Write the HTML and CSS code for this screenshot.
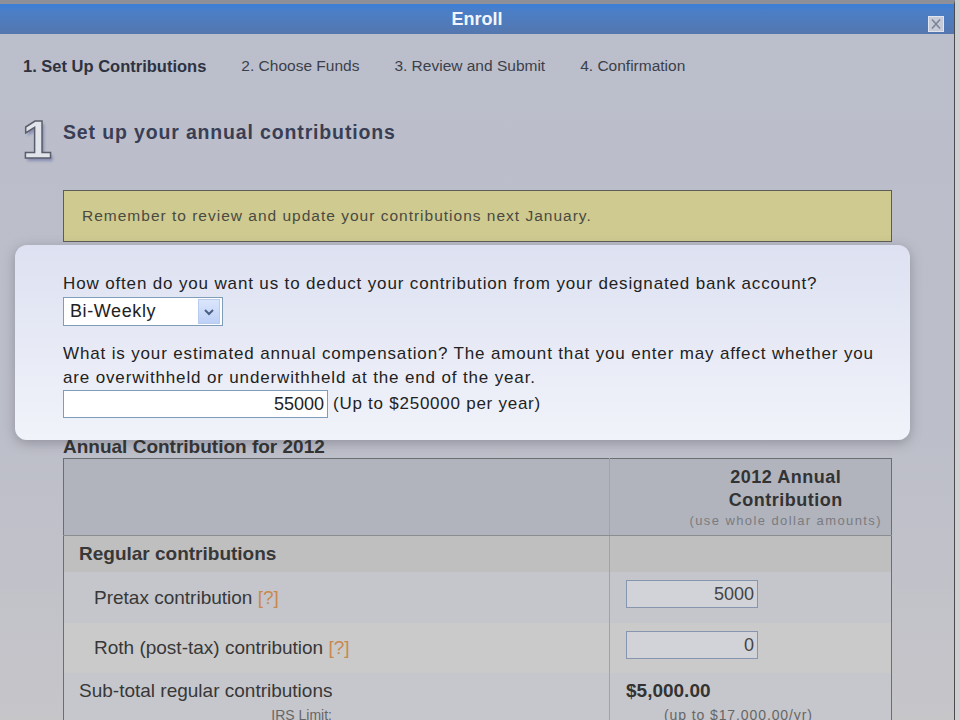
FILE: index.html
```html
<!DOCTYPE html>
<html lang="en">
<head>
	<meta charset="UTF-8">
	<title>Enroll</title>
	<link rel="stylesheet" href="styles.css">
</head>
<body>
	<div id="window">
		<div class="titlebar">
			<span></span>
			<h1>Enroll</h1>
			<a class="close" href="javascript:;">
				<svg width="16" height="16" viewBox="0 0 16 16"><path d="M4 3.5 L12 12.5 M12 3.5 L4 12.5" stroke="#7d8496" stroke-width="1.6" fill="none"/></svg>
			</a>
		</div>
		<div class="content">
			<ul class="steps">
				<li class="current">1. Set Up Contributions</li>
				<li>2. Choose Funds</li>
				<li>3. Review and Submit</li>
				<li>4. Confirmation</li>
			</ul>
			<div class="step-head">
				<span class="step-num">1</span>
				<h2>Set up your annual contributions</h2>
			</div>
			<div class="notice">Remember to review and update your contributions next January.</div>
			<div class="spotlight">
				<p class="q1">How often do you want us to deduct your contribution from your designated bank account?</p>
				<div class="select">
					<span>Bi-Weekly</span>
					<i><svg width="12" height="8" viewBox="0 0 12 8"><path d="M2 2 L6 6 L10 2" stroke="#4b5f86" stroke-width="2" fill="none"/></svg></i>
				</div>
				<p class="q2">What is your estimated annual compensation? The amount that you enter may affect whether you are overwithheld or underwithheld at the end of the year.</p>
				<div class="pay">
					<input class="pay-input" type="text" value="55000"> (Up to $250000 per year)
				</div>
			</div>
			<h3>Annual Contribution for 2012</h3>
			<table class="contrib">
				<colgroup>
					<col class="col-label">
					<col>
				</colgroup>
				<tr class="head">
					<th></th>
					<th class="amount"><div>2012 Annual<br>Contribution<small>(use whole dollar amounts)</small></div></th>
				</tr>
				<tr class="group">
					<td>Regular contributions</td>
					<td class="amount"></td>
				</tr>
				<tr class="line odd">
					<td class="indent">Pretax contribution <a href="javascript:;">[?]</a></td>
					<td class="amount"><input type="text" value="5000"></td>
				</tr>
				<tr class="line">
					<td class="indent">Roth (post-tax) contribution <a href="javascript:;">[?]</a></td>
					<td class="amount"><input type="text" value="0"></td>
				</tr>
				<tr class="total">
					<td>Sub-total regular contributions<div class="limit">IRS Limit:</div></td>
					<td class="amount"><b>$5,000.00</b><div class="limit-val">(up to $17,000.00/yr)</div></td>
				</tr>
			</table>
		</div>
	</div>
</body>
</html>
```

FILE: styles.css
```css
body {
	margin: 0;
	height: 720px;
	overflow: hidden;
	background: #cfcfd2;
	font-family: "Liberation Sans", Arial, sans-serif;
	color: #333;
}
ul {
	padding: 0;
	margin: 0;
	list-style: none;
}
a {
	text-decoration: none;
}
#window {
	width: 954px;
	height: 716px;
	border-top: 4px solid #8d9099;
	border-right: 1px solid #4b4b4e;
	background: linear-gradient(#bbbecb 0, #bcbec9 420px, #c6c6c9 716px);
}
.titlebar {
	display: grid;
	grid-template-columns: 1fr auto 1fr;
	height: 30px;
	background: linear-gradient(#3b7fd8 0, #4b7ec6 25%, #5577ae 100%);
}
.titlebar h1 {
	margin: 0;
	line-height: 30px;
	font-size: 18px;
	color: #f2f5ff;
}
.close {
	justify-self: end;
	align-self: end;
	width: 16px;
	height: 16px;
	margin: 0 10px 2px 0;
	background: #c7cbd8;
	box-shadow: inset 0 0 0 1px #e2e5ee;
}
.close svg {
	display: block;
}
.content {
	padding: 0 62px 0 63px;
}
.steps {
	display: flex;
	gap: 35px;
	margin: 22px 0 0 -40px;
	line-height: 20px;
	font-size: 15.5px;
	color: #3c3f4a;
}
.steps .current {
	font-weight: bold;
	font-size: 16.5px;
	color: #2e3240;
}
.step-head {
	display: flex;
	align-items: flex-start;
	height: 52px;
	margin: 36px 0 0 -41px;
}
.step-num {
	width: 41px;
	font-size: 54px;
	line-height: 1;
	font-weight: bold;
	color: #e2e4ec;
	-webkit-text-stroke: 1.5px #5a5e6a;
	text-shadow: 2px 3px 3px rgba(70, 80, 150, .45);
}
.step-head h2 {
	margin: 8px 0 0;
	font-size: 19.5px;
	letter-spacing: .85px;
	line-height: 24px;
	color: #3a3e54;
}
.notice {
	margin-top: 26px;
	height: 50px;
	padding: 0 18px;
	line-height: 50px;
	border: 1px solid #5c5c58;
	background: #cfca8f;
	font-size: 15.5px;
	letter-spacing: 1px;
	color: #4a4a42;
}
.spotlight {
	position: relative;
	margin: 3px -18px 0 -48px;
	padding: 29px 18px 22px 48px;
	border-radius: 12px;
	background: linear-gradient(#dde1f1, #f1f3fa);
	box-shadow: 0 3px 12px rgba(90, 90, 100, .45);
	font-size: 17px;
	letter-spacing: .85px;
	color: #222;
}
.spotlight p {
	margin: 0;
}
.q1 {
	line-height: 20px;
}
.select {
	display: flex;
	align-items: center;
	justify-content: space-between;
	width: 158px;
	height: 27px;
	margin-top: 3px;
	border: 1px solid #7f9db9;
	background: #fff;
}
.select span {
	padding-left: 6px;
	font-size: 18px;
	letter-spacing: .6px;
}
.select i {
	display: flex;
	align-items: center;
	justify-content: center;
	width: 20px;
	height: 23px;
	margin-right: 2px;
	border: 1px solid #b9cbee;
	background: linear-gradient(#dbe6fc, #bdd0f6);
}
.q2 {
	margin-top: 16px !important;
	line-height: 24px;
}
.pay {
	display: flex;
	align-items: center;
	gap: 5px;
	height: 28px;
	letter-spacing: .75px;
}
.pay-input {
	box-sizing: border-box;
	width: 265px;
	height: 28px;
	padding: 0 3px;
	border: 1px solid #7f9db9;
	background: #fff;
	font: 18px "Liberation Sans", Arial, sans-serif;
	text-align: right;
	color: #222;
}
h3 {
	position: relative;
	margin: -4px 0 0;
	font-size: 19px;
	line-height: 22px;
	color: #333;
}
.contrib {
	width: 829px;
	table-layout: fixed;
	border-collapse: collapse;
	border: 1px solid #6d6e72;
	font-size: 19px;
	color: #383838;
}
.col-label {
	width: 546px;
}
.contrib td,
.contrib th {
	padding: 0 0 0 15px;
	text-align: left;
	vertical-align: top;
}
.contrib .amount {
	border-left: 1px solid #a2a3a8;
	padding-left: 16px;
}
.contrib .indent {
	padding-left: 30px;
}
.head th {
	height: 69px;
	background: #b1b4bd;
	border-bottom: 1px solid #8c8d92;
}
.contrib .head .amount {
	padding: 7px 9px 0 0;
	text-align: right;
}
.head .amount div {
	display: inline-block;
	text-align: center;
	font-size: 18px;
	letter-spacing: .5px;
	line-height: 23px;
	color: #333;
}
.head small {
	display: block;
	font-weight: normal;
	font-size: 13px;
	letter-spacing: 1.4px;
	line-height: 18px;
	color: #7a7b80;
}
.group td {
	height: 36px;
	line-height: 36px;
	background: #bfbfc0;
	font-weight: bold;
}
.line td {
	height: 50px;
	line-height: 50px;
	background: #cacacb;
}
.line.odd td {
	height: 51px;
	line-height: 51px;
	background: #c4c6cc;
}
.line a {
	color: #c9884f;
}
.line input {
	box-sizing: border-box;
	width: 132px;
	height: 28px;
	margin-top: 8px;
	padding: 0 3px;
	vertical-align: top;
	border: 1px solid #8596ae;
	background: #d2d3d8;
	font: 18px "Liberation Sans", Arial, sans-serif;
	text-align: right;
	color: #444;
}
.total td {
	padding-top: 6px;
	line-height: 24px;
	background: #c6c7cc;
}
.total b {
	font-size: 19px;
	color: #333;
}
.limit {
	width: 253px;
	text-align: right;
	font-size: 14px;
	color: #666;
}
.limit-val {
	padding-left: 38px;
	font-size: 14px;
	letter-spacing: .9px;
	color: #666;
}
```
